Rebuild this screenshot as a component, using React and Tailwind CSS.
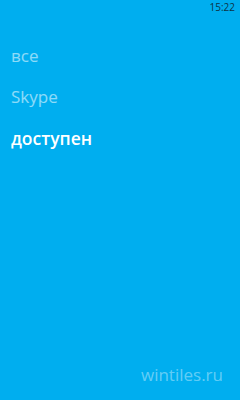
export default function App() {
  return (
    <div
      className="relative w-[240px] h-[400px] bg-[#00aeef] overflow-hidden"
      style={{ fontFamily: '"Open Sans", "Noto Sans", sans-serif' }}
    >
      {/* status bar */}
      <div className="flex justify-end h-[15px] pr-[5px] pt-[1px]">
        <span className="text-[10px] leading-[13px] text-[#0d3447]">15:22</span>
      </div>

      {/* pivot list */}
      <div className="flex flex-col pl-[11px] pt-[30px] gap-[19px]">
        <span className="text-[17px] leading-[22px] text-white/55">все</span>
        <span className="text-[17px] leading-[22px] text-white/55">Skype</span>
        <span className="text-[17.5px] leading-[22px] font-semibold text-white">доступен</span>
      </div>

      <span className="absolute right-[17px] bottom-[14px] text-[17px] leading-[22px] text-white/40">
        wintiles.ru
      </span>
    </div>
  );
}
